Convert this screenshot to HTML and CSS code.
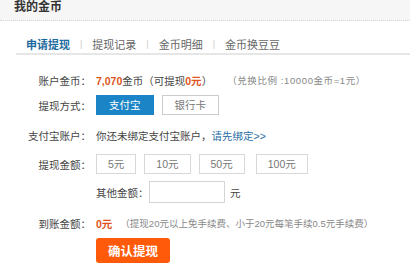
FILE: index.html
```html
<!DOCTYPE html>
<html lang="zh-CN">
<head>
  <meta charset="UTF-8">
  <title>我的金币</title>
  <link rel="stylesheet" href="styles.css">
</head>
<body>
  <div class="head">
    <h1>我的金币</h1>
  </div>

  <!-- tabs -->
  <div class="tabs">
    <a class="tab on">申请提现</a>
    <span class="sep">|</span>
    <a class="tab">提现记录</a>
    <span class="sep">|</span>
    <a class="tab">金币明细</a>
    <span class="sep">|</span>
    <a class="tab">金币换豆豆</a>
  </div>

  <div class="form">
    <div class="row r1">
      <span class="lbl">账户金币：</span>
      <span class="val"><b class="hl">7,070</b>金币（可提现<b class="hl">0元</b>）</span>
      <span class="note rate">（兑换比例 :10000金币=1元）</span>
    </div>

    <div class="row r2">
      <span class="lbl">提现方式：</span>
      <span class="pay on">支付宝</span>
      <span class="pay">银行卡</span>
    </div>

    <div class="row r3">
      <span class="lbl">支付宝账户：</span>
      <span class="val">你还未绑定支付宝账户，<a class="link">请先绑定&gt;&gt;</a></span>
    </div>

    <div class="row r4">
      <span class="lbl">提现金额：</span>
      <span class="amt">5元</span>
      <span class="amt">10元</span>
      <span class="amt">50元</span>
      <span class="amt">100元</span>
    </div>

    <div class="row r5">
      <span class="lbl"></span>
      <span class="sub">其他金额：</span>
      <input class="other" type="text">
      <span class="unit">元</span>
    </div>

    <div class="row r6">
      <span class="lbl">到账金额：</span>
      <b class="hl">0元</b>
      <span class="note fee">（提现20元以上免手续费、小于20元每笔手续0.5元手续费）</span>
    </div>

    <div class="row r7">
      <span class="lbl"></span>
      <button class="submit">确认提现</button>
    </div>
  </div>
</body>
</html>
```

FILE: styles.css
```css
body {
  margin: 0;
  font-family: "Liberation Sans", "Noto Sans CJK SC", sans-serif;
  font-size: 10.5px;
  color: #444;
  background: #fff;
}
.head {
  height: 20px;
  background: #f6f6f6;
  border-bottom: 1px dotted #d6d6d6;
  padding-left: 14px;
}
.head h1 {
  margin: 0;
  font-size: 12px;
  line-height: 15px;
  color: #333;
}
.tabs {
  margin: 13px 0 0 16px;
  padding-left: 10px;
  height: 19px;
  border-bottom: 2px solid #e6e6e6;
  display: flex;
  align-items: center;
  font-size: 11px;
}
.tab {
  color: #666;
}
.tab.on {
  color: #1b6a9e;
  font-weight: bold;
}
.sep {
  color: #ccc;
  font-size: 9px;
  margin: 0 10px;
}
.form {
  padding-top: 15px;
}
.row {
  display: flex;
  align-items: center;
  height: 20px;
  white-space: nowrap;
}
.row > * {
  flex-shrink: 0;
}
.lbl {
  width: 91px;
  margin-right: 5px;
  text-align: right;
  color: #444;
}
.hl {
  color: #e0541c;
  font-weight: bold;
}
.note {
  color: #888;
  font-size: 9.5px;
  margin-left: 15px;
}
.rate {
  letter-spacing: 0.6px;
}
.fee {
  margin-left: 8px;
}
.r2 { margin-top: 5px; }
.r3 { margin-top: 10px; }
.r4 { margin-top: 9px; }
.r5 { margin-top: 7px; height: 22px; }
.r6 { margin-top: 10px; }
.r7 { margin-top: 5px; height: 25px; }
.pay {
  height: 18px;
  line-height: 18px;
  padding: 0 12px;
  border: 1px solid #ccc;
  color: #777;
  margin-right: 8px;
}
.pay.on {
  background: #1a84c6;
  border-color: #1a84c6;
  color: #fff;
}
.link {
  color: #2a6ea6;
}
.amt {
  height: 18px;
  line-height: 18px;
  padding: 0 11px;
  border: 1px solid #d8d8d8;
  color: #777;
  margin-right: 8px;
}
.amt:last-child {
  margin-left: 3px;
}
.sub {
  width: 53px;
}
.other {
  width: 74px;
  height: 20px;
  padding: 0;
  margin: 0;
  border: 1px solid #d4d4d4;
}
.unit {
  margin-left: 5px;
}
.submit {
  height: 25px;
  padding: 0 12px;
  border: none;
  border-radius: 3px;
  background: #ff5a0a;
  color: #fff;
  font-family: inherit;
  font-size: 12.5px;
  font-weight: bold;
}
```
